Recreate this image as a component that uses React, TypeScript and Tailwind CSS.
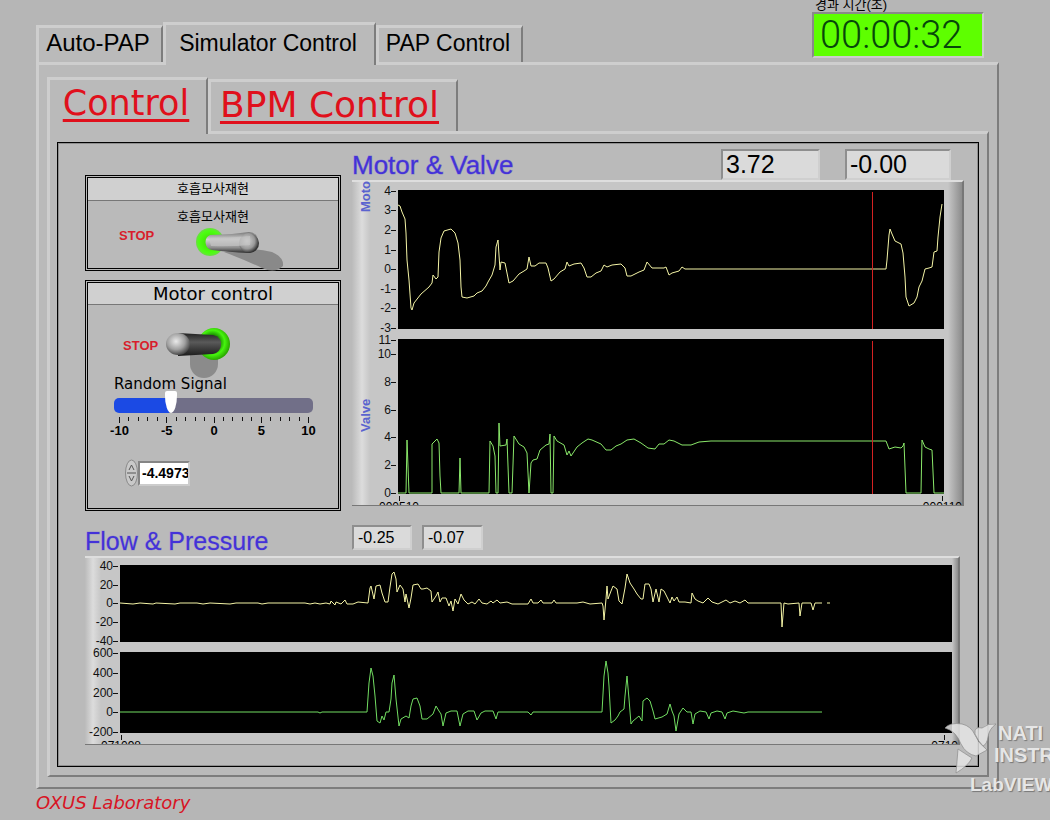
import { useState } from "react";
import clsx from "clsx";

type Tick = { label: string; y: number };

const motorTicks: Tick[] = [
  { label: "4", y: 1 },
  { label: "3", y: 20 },
  { label: "2", y: 40 },
  { label: "1", y: 60 },
  { label: "0", y: 79 },
  { label: "-1", y: 99 },
  { label: "-2", y: 118 },
  { label: "-3", y: 138 },
];

const valveTicks: Tick[] = [
  { label: "11", y: 1 },
  { label: "10", y: 15 },
  { label: "8", y: 43 },
  { label: "6", y: 71 },
  { label: "4", y: 98 },
  { label: "2", y: 126 },
  { label: "0", y: 154 },
];

const flowTicks: Tick[] = [
  { label: "40", y: 1 },
  { label: "20", y: 20 },
  { label: "0", y: 38 },
  { label: "-20", y: 57 },
  { label: "-40", y: 76 },
];

const pressureTicks: Tick[] = [
  { label: "600", y: 1 },
  { label: "400", y: 21 },
  { label: "200", y: 41 },
  { label: "0", y: 60 },
  { label: "-200", y: 80 },
];

const motorWave =
  "0,15 2,16 4,22 7,29 8,43 9,70 11,90 13,118 14,120 16,113 23,104 31,97 34,93 35,85 38,89 40,87 41,62 43,48 46,41 53,39 57,43 60,53 62,70 63,97 64,107 69,108 76,106 79,103 84,101 88,96 90,92 94,85 97,75 98,57 100,50 102,80 103,72 107,73 109,83 111,93 115,91 121,84 126,81 129,79 131,67 133,76 137,76 141,73 148,73 150,78 153,91 156,89 162,82 167,79 169,72 171,76 176,74 183,73 186,78 189,87 193,87 198,83 203,81 206,75 209,77 214,75 223,74 227,78 229,86 233,86 241,82 246,80 249,72 254,78 266,78 268,77 271,85 274,83 281,81 284,77 287,79 488,79 489,70 491,45 492,39 494,44 497,51 503,54 505,63 507,87 508,107 511,116 516,113 519,107 521,97 524,91 527,79 531,78 534,77 536,62 539,61 540,47 542,27 544,14";

const valveWave =
  "0,154 8,154 9,101 11,154 34,154 34,105 39,100 41,104 42,137 43,154 61,154 62,119 63,154 91,154 92,102 95,107 97,117 98,154 100,154 101,84 102,107 108,106 109,100 111,154 114,154 116,97 121,105 126,108 129,114 131,154 133,124 135,121 139,120 142,111 148,106 151,105 152,95 153,154 155,154 156,97 159,102 166,106 169,116 171,112 173,117 179,108 184,104 190,100 194,101 203,105 208,111 213,111 218,107 223,105 229,101 236,100 243,104 250,109 257,110 261,105 266,105 271,101 276,102 284,106 293,106 301,103 313,102 488,102 491,110 497,108 503,109 505,107 506,104 508,154 523,154 524,101 527,108 531,110 534,111 536,154 546,154";

const flowWave =
  "0,38 13,39 20,38 33,39 36,38 55,39 60,38 77,38 83,39 90,38 110,39 116,38 138,38 142,39 148,38 160,38 185,38 190,39 195,38 200,39 206,38 210,39 211,36 215,40 216,37 221,39 225,35 227,39 233,39 238,37 248,38 250,23 251,21 254,34 256,21 260,20 262,28 265,37 268,37 270,22 272,9 274,7 276,14 277,27 280,20 283,24 285,37 286,29 289,43 291,33 293,20 298,19 301,24 303,24 307,23 311,26 312,37 316,31 318,27 320,37 322,33 326,33 329,41 331,36 333,46 335,34 338,39 341,29 344,35 348,39 352,37 355,39 359,34 362,38 367,39 371,36 373,38 377,35 380,38 387,37 392,39 408,39 411,34 413,38 418,38 421,35 423,38 432,38 434,35 436,38 457,38 463,37 470,39 482,38 483,41 484,55 486,34 487,21 488,34 491,26 493,21 497,24 499,36 502,39 505,23 507,9 510,18 514,24 517,29 521,34 523,34 525,19 529,19 531,24 533,37 536,24 539,37 541,24 544,26 547,32 550,38 552,32 554,36 557,32 559,37 565,37 571,38 572,28 575,34 578,36 583,38 588,33 592,37 598,39 606,35 610,38 615,36 620,38 625,35 628,38 661,38 662,62 664,38 668,39 679,38 680,51 682,38 691,38 693,45 695,38 702,38";

const pressureWave =
  "0,60 198,60 200,61 202,60 247,60 249,31 251,16 253,24 255,44 257,69 260,71 262,64 264,68 266,60 269,60 271,47 272,31 274,23 276,47 279,74 281,67 286,64 289,66 291,54 293,47 297,46 300,54 302,67 307,67 313,62 316,54 319,59 321,62 323,74 326,61 331,59 337,59 340,74 343,62 348,59 354,59 357,68 361,61 365,59 373,59 376,67 378,60 408,60 411,63 413,60 482,60 484,24 486,9 488,21 489,34 491,71 495,68 498,64 500,60 504,57 505,44 507,24 509,47 511,72 513,69 519,64 522,69 523,49 527,46 530,49 533,59 535,67 542,65 547,62 550,52 552,59 554,64 556,79 559,62 563,56 567,60 571,60 573,72 575,62 580,59 586,60 589,67 591,61 597,59 602,60 605,67 607,61 613,59 624,61 628,60 702,60";

function Axis({ ticks, className, width, title, titleY }: { ticks: Tick[]; className: string; width: number; title?: string; titleY?: number }) {
  return (
    <svg className={clsx("shrink-0 overflow-visible text-[12px]", className)}>
      {title && (
        <text transform={`translate(18 ${titleY}) rotate(-90)`} fill="#5a63cf" fontWeight="bold" fontSize="13">
          {title}
        </text>
      )}
      {ticks.map((t) => (
        <g key={t.label}>
          <text x={width - 7} y={t.y + 4} textAnchor="end" fill="#111">{t.label}</text>
          <path d={`M${width - 7} ${t.y}h5`} stroke="#111" shapeRendering="crispEdges" />
        </g>
      ))}
    </svg>
  );
}

function TimeAxis({ start, end, className }: { start: string; end: string; className: string }) {
  return (
    <div className={clsx("flex h-[11px] justify-between overflow-hidden pt-[2px] text-[12px] leading-none", className)}>
      {[start, end].map((t) => (
        <div key={t} className="flex flex-col items-center">
          <div className="h-[5px] w-px shrink-0 bg-[#111]" />
          <span>{t}</span>
        </div>
      ))}
    </div>
  );
}

function Plot({ points, color, width, height, className, cursor, tail }: { points: string; color: string; width: number; height: number; className: string; cursor?: number; tail?: string }) {
  return (
    <svg
      className={clsx("min-w-0 flex-1 bg-black", className)}
      viewBox={`0 0 ${width} ${height}`}
      preserveAspectRatio="none"
    >
      <polyline points={points} fill="none" stroke={color} vectorEffect="non-scaling-stroke" />
      {tail && <polyline points={tail} fill="none" stroke={color} vectorEffect="non-scaling-stroke" />}
      {cursor && <path d={`M${cursor}.5 2V${height}`} stroke="#d42222" vectorEffect="non-scaling-stroke" />}
    </svg>
  );
}

function Readout({ value, label, className }: { value: string; label: string; className: string }) {
  return (
    <output
      aria-label={label}
      className={clsx("block border-2 border-t-[#8e8e8e] border-r-[#cfcfcf] border-b-[#cfcfcf] border-l-[#8e8e8e] bg-[#dadada] text-black", className)}
    >
      {value}
    </output>
  );
}

function TopTab({ children, active, className }: { children: string; active?: boolean; className: string }) {
  return (
    <button
      type="button"
      role="tab"
      aria-selected={!!active}
      className={clsx(
        "border-t-[3px] border-r-2 border-l-[3px] border-t-[#cecece] border-r-[#7d7d7d] border-l-[#cecece] bg-[#bababa] whitespace-nowrap",
        active && "relative z-10 -mb-[3px]",
        className
      )}
    >
      {children}
    </button>
  );
}

function SlideSwitchRight() {
  return (
    <svg width="100" height="46" viewBox="190 226 100 46" className="block overflow-visible">
      <defs>
        <linearGradient id="leverTop" x1="0" y1="0" x2="0" y2="1">
          <stop offset="0" stopColor="#777" />
          <stop offset="0.35" stopColor="#d2d2d2" />
          <stop offset="0.75" stopColor="#8d8d8d" />
          <stop offset="1" stopColor="#2b2b2b" />
        </linearGradient>
        <radialGradient id="leverKnob" cx="0.4" cy="0.4" r="0.6">
          <stop offset="0" stopColor="#d5d5d5" />
          <stop offset="0.65" stopColor="#999" />
          <stop offset="1" stopColor="#333" />
        </radialGradient>
        <radialGradient id="ringOn" cx="0.5" cy="0.5" r="0.5">
          <stop offset="0" stopColor="#3fd800" />
          <stop offset="0.8" stopColor="#4dff12" />
          <stop offset="1" stopColor="#6bdc45" />
        </radialGradient>
      </defs>
      <path d="M224 253 Q250 247 272 253 Q284 258 283 267 Q275 275 262 269 Q245 261 224 253Z" fill="#898989" />
      <circle cx="210" cy="243" r="14" fill="url(#ringOn)" />
      <path d="M210 236 Q230 236 249 233 A10 10 0 0 1 249 254 Q228 253 212 251 A8 8 0 0 1 210 236Z" fill="url(#leverTop)" />
      <circle cx="249" cy="244" r="10" fill="url(#leverKnob)" />
      <path d="M209 239 Q230 239 250 237 L250 246 Q230 248 211 247Z" fill="#c4c4c4" opacity="0.7" />
    </svg>
  );
}

function SlideSwitchLeft() {
  return (
    <svg width="75" height="56" viewBox="160 321 75 56" className="block overflow-visible">
      <defs>
        <linearGradient id="leverDark" x1="0" y1="0" x2="0" y2="1">
          <stop offset="0" stopColor="#222" />
          <stop offset="0.4" stopColor="#5a5a5a" />
          <stop offset="1" stopColor="#1c1c1c" />
        </linearGradient>
        <radialGradient id="knobLight" cx="0.42" cy="0.38" r="0.62">
          <stop offset="0" stopColor="#eaeaea" />
          <stop offset="0.6" stopColor="#a0a0a0" />
          <stop offset="1" stopColor="#4a4a4a" />
        </radialGradient>
        <radialGradient id="ringGreen" cx="0.45" cy="0.45" r="0.55">
          <stop offset="0.4" stopColor="#178a00" />
          <stop offset="0.7" stopColor="#46f50e" />
          <stop offset="1" stopColor="#2aa800" />
        </radialGradient>
      </defs>
      <path d="M190 350 h28 v14 a14 14 0 0 1 -28 0z" fill="#8b8b8b" />
      <circle cx="214" cy="344" r="16" fill="url(#ringGreen)" />
      <path d="M178 333 L213 335 Q221 337 221 344 Q221 352 213 354 L178 356Z" fill="url(#leverDark)" />
      <ellipse cx="178" cy="344" rx="12" ry="11" fill="url(#knobLight)" />
    </svg>
  );
}

const scaleMarks = Array.from({ length: 21 }, (_, i) => i);

export default function App() {
  const [signal, setSignal] = useState(-4.4973);
  const [breath, setBreath] = useState(true);
  const [motor, setMotor] = useState(true);
  const fill = ((signal + 10) / 20) * 100;

  return (
    <div className="relative min-h-screen overflow-hidden bg-[#b6b6b6] font-['Liberation_Sans','Noto_Sans_CJK_KR',sans-serif] text-black">
      <header className="mr-[66px] ml-9 flex h-[62px] items-end justify-between">
        <div role="tablist" className="flex items-end text-[24px] leading-none">
          <TopTab className="h-[37px] w-[127px] pr-1 pb-1">Auto-PAP</TopTab>
          <TopTab active className="h-[43px] w-[213px] pr-1 pb-1 text-[23px]">Simulator Control</TopTab>
          <TopTab className="h-[37px] w-[147px] pr-1 pb-1 text-[23px]">PAP Control</TopTab>
        </div>
        <div className="mb-1 w-[172px]">
          <div id="elapsed" className="pl-[3px] text-[13px] leading-[14px]">경과 시간(초)</div>
          <output
            aria-labelledby="elapsed"
            className="block border-2 border-t-[#8a8a8a] border-r-[#cccccc] border-b-[#cccccc] border-l-[#8a8a8a] bg-[#5eff00] pl-[6px] font-['Roboto',sans-serif] text-[38px] leading-[42px] font-light text-[#06470a]"
          >
            00:00:32
          </output>
        </div>
      </header>

      <main className="mr-[51px] ml-9 border-t-[3px] border-r-2 border-b-2 border-l-[3px] border-t-[#cecece] border-r-[#7d7d7d] border-b-[#7d7d7d] border-l-[#cecece] bg-[#bababa] pt-3 pr-2 pb-[10px] pl-2">
        <div role="tablist" className="flex items-end font-['DejaVu_Sans',sans-serif] text-[35px] leading-none text-[#e0101c] decoration-2 underline-offset-4">
          <TopTab active className="h-[57px] w-[161px] pr-1 pb-2 underline">Control</TopTab>
          <TopTab className="h-[52px] w-[250px] pr-2 pb-1 text-[36px] underline">BPM Control</TopTab>
        </div>

        <div className="border-t-[3px] border-r-2 border-b-2 border-l-[3px] border-t-[#cecece] border-r-[#7d7d7d] border-b-[#7d7d7d] border-l-[#cecece] pt-2 pr-2 pb-2 pl-[7px]">
          <div className="border border-black pb-[21px] pl-[27px] outline-1 -outline-offset-2 outline-[#8f8f8f]">
            <section className="flex pr-[14px]">
              <div className="flex w-64 shrink-0 flex-col gap-[9px] pt-8">
                <div className="h-24 border-3 border-double border-black">
                  <h2 className="border-b border-[#777] bg-[#d0d0d0] text-center text-[13px] leading-[22px]">호흡모사재현</h2>
                  <div id="breath" className="mt-2 text-center text-[13px] leading-4">호흡모사재현</div>
                  <div className="flex pl-[31px]">
                    <span className="w-[71px] text-[13px] leading-[22px] font-bold text-[#d81e2c]">STOP</span>
                    <button type="button" role="switch" aria-checked={breath} aria-labelledby="breath" onClick={() => setBreath(!breath)}>
                      <SlideSwitchRight />
                    </button>
                  </div>
                </div>

                <div className="h-[231px] border-3 border-double border-black">
                  <h2 id="motor" className="border-b border-[#777] bg-[#d0d0d0] text-center font-['DejaVu_Sans',sans-serif] text-[18px] leading-[21px]">Motor control</h2>
                  <div className="flex pt-4 pl-[35px]">
                    <span className="w-[37px] text-[13px] leading-[50px] font-bold text-[#d81e2c]">STOP</span>
                    <button type="button" role="switch" aria-checked={motor} aria-labelledby="motor" onClick={() => setMotor(!motor)}>
                      <SlideSwitchLeft />
                    </button>
                  </div>
                  <div className="w-[225px] pl-[26px]">
                    <label htmlFor="signal" className="block font-['DejaVu_Sans',sans-serif] text-[15px] leading-[14px] whitespace-nowrap">Random Signal</label>
                    <input
                      id="signal"
                      type="range"
                      min={-10}
                      max={10}
                      step="any"
                      value={signal}
                      onChange={(e) => setSignal(Number(e.target.value))}
                      style={{ "--fill": `${fill}%` } as React.CSSProperties}
                      className="block h-[22px] w-full appearance-none bg-transparent [&::-webkit-slider-runnable-track]:mt-[7px] [&::-webkit-slider-runnable-track]:h-[15px] [&::-webkit-slider-runnable-track]:rounded-[5px] [&::-webkit-slider-runnable-track]:bg-[linear-gradient(to_right,#1b4ae4_var(--fill),#716f88_var(--fill))] [&::-webkit-slider-thumb]:-mt-[7px] [&::-webkit-slider-thumb]:h-[22px] [&::-webkit-slider-thumb]:w-[12px] [&::-webkit-slider-thumb]:appearance-none [&::-webkit-slider-thumb]:[border-radius:2px_2px_50%_50%/2px_2px_80%_80%] [&::-webkit-slider-thumb]:bg-white"
                    />
                    <svg className="block h-6 w-full overflow-visible" viewBox="0 0 199 24" fontSize="13" fontWeight="bold">
                      {scaleMarks.map((i) => (
                        <path key={i} d={`M${5 + Math.round(i * 9.45)}.5 4v${i % 5 ? 4 : 6}`} stroke="#111" />
                      ))}
                      {[-10, -5, 0, 5, 10].map((n) => (
                        <text key={n} x={100 + n * 9.45} y="22" textAnchor="middle">{n}</text>
                      ))}
                    </svg>
                  </div>
                  <div className="mt-[22px] flex items-center pl-[37px]">
                    <svg width="13" height="28" viewBox="0 0 13 28">
                      <ellipse cx="6.5" cy="14" rx="6" ry="13" fill="#c9c9c9" stroke="#8a8a8a" />
                      <path d="M4 11l2.5-5 2.5 5M4 17l2.5 5 2.5-5M2 14h9" fill="none" stroke="#555" />
                    </svg>
                    <input
                      aria-label="Random Signal value"
                      readOnly
                      value="-4.4973"
                      className="h-[25px] w-[52px] border-2 border-t-[#858585] border-r-[#cccccc] border-b-[#cccccc] border-l-[#858585] bg-white pl-[2px] text-[14px] font-bold"
                    />
                  </div>
                </div>
              </div>

              <div className="ml-[11px] min-w-0 flex-1">
                <div className="flex h-[37px] items-end justify-between pr-[13px]">
                  <h2 className="text-[26px] leading-[30px] whitespace-nowrap text-[#4432d8] [-webkit-text-stroke:1px_#4432d860]">Motor &amp; Valve</h2>
                  <div className="flex gap-[25px]">
                    <Readout label="Valve value" value="3.72" className="h-[31px] w-[99px] pl-[3px] text-[25px] leading-[27px]" />
                    <Readout label="Motor value" value="-0.00" className="h-[31px] w-[106px] pl-[3px] text-[25px] leading-[27px]" />
                  </div>
                </div>
                <div className="border-t-2 border-r-2 border-b border-t-[#dedede] border-r-[#777] border-b-[#777] bg-[linear-gradient(to_right,#bbb_0,#dcdcdc_10px,#c6c6c6_18px,#c6c6c6_calc(100%-14px),#8c8c8c)] pt-2 pr-[18px]">
                  <div className="flex">
                    <Axis ticks={motorTicks} width={46} className="h-[139px] w-[46px]" title="Moto" titleY={22} />
                    <Plot points={motorWave} color="#f4f4a6" width={546} height={139} className="h-[139px]" cursor={474} />
                  </div>
                  <div className="mt-[10px] flex">
                    <Axis ticks={valveTicks} width={46} className="h-[155px] w-[46px]" title="Valve" titleY={93} />
                    <Plot points={valveWave} color="#8ae86a" width={546} height={155} className="h-[155px]" cursor={474} />
                  </div>
                  <TimeAxis start="000510" end="000110" className="-mr-[18px] pl-[27px]" />
                </div>
              </div>
            </section>

            <section className="pr-[18px]">
              <div className="flex h-[45px] items-end">
                <h2 className="w-[267px] text-[25px] leading-[30px] whitespace-nowrap text-[#4432d8] [-webkit-text-stroke:1px_#4432d840]">Flow &amp; Pressure</h2>
                <div className="mb-[6px] flex gap-[10px]">
                  <Readout label="Flow value" value="-0.25" className="h-[25px] w-[60px] pl-1 text-[16px] leading-[22px]" />
                  <Readout label="Pressure value" value="-0.07" className="h-[25px] w-[61px] pl-1 text-[16px] leading-[22px]" />
                </div>
              </div>
              <div className="border-t-2 border-r-2 border-b border-t-[#dedede] border-r-[#777] border-b-[#777] bg-[linear-gradient(to_right,#bbb_0,#dcdcdc_8px,#c6c6c6_16px,#c6c6c6_calc(100%-6px),#8c8c8c)] pt-[7px] pr-[6px]">
                <div className="flex">
                  <Axis ticks={flowTicks} width={35} className="h-[77px] w-[35px]" />
                  <Plot points={flowWave} tail="707,38 710,38" color="#f4f4a6" width={832} height={77} className="h-[77px]" />
                </div>
                <div className="mt-[10px] flex">
                  <Axis ticks={pressureTicks} width={35} className="h-[81px] w-[35px]" />
                  <Plot points={pressureWave} color="#72dd62" width={832} height={81} className="h-[81px]" />
                </div>
                <TimeAxis start="071098" end="0710" className="-mr-[6px] pl-4" />
              </div>
            </section>
          </div>
        </div>
      </main>

      <footer className="ml-9 pt-1 font-['DejaVu_Sans',sans-serif] text-[18px] leading-5 text-[#d81424] italic">OXUS Laboratory</footer>

      <div className="absolute top-[720px] right-0 z-20 w-[106px] overflow-hidden text-[20px] leading-6 font-bold text-[#e6e6e6] [text-shadow:1px_1px_1px_#777]">
        <div className="flex">
          <svg width="50" height="54" viewBox="0 0 50 54" className="shrink-0 overflow-visible">
            <g fill="#e4e4e4" fillOpacity="0.85" stroke="#8c8c8c" strokeOpacity="0.7">
              <path d="M1 8Q6 2 18 4Q27 6 31 15Q34 23 43 30L32 36Q22 34 17 24Q12 11 1 8Z" />
              <path d="M14 29Q20 33 28 38Q24 46 12 53Q13 42 14 29Z" />
              <path d="M31 14Q30 6 38 8Q44 3 52 4Q45 9 44 17Q43 24 39 26Q34 21 31 14Z" />
            </g>
          </svg>
          <div className="pt-[2px] whitespace-nowrap">
            <div className="pl-1 leading-[22px]">NATI</div>
            <div className="leading-[22px]">INSTR</div>
          </div>
        </div>
        <div className="pt-px pl-[26px] text-[19px] leading-5 whitespace-nowrap">LabVIEW</div>
      </div>
    </div>
  );
}
